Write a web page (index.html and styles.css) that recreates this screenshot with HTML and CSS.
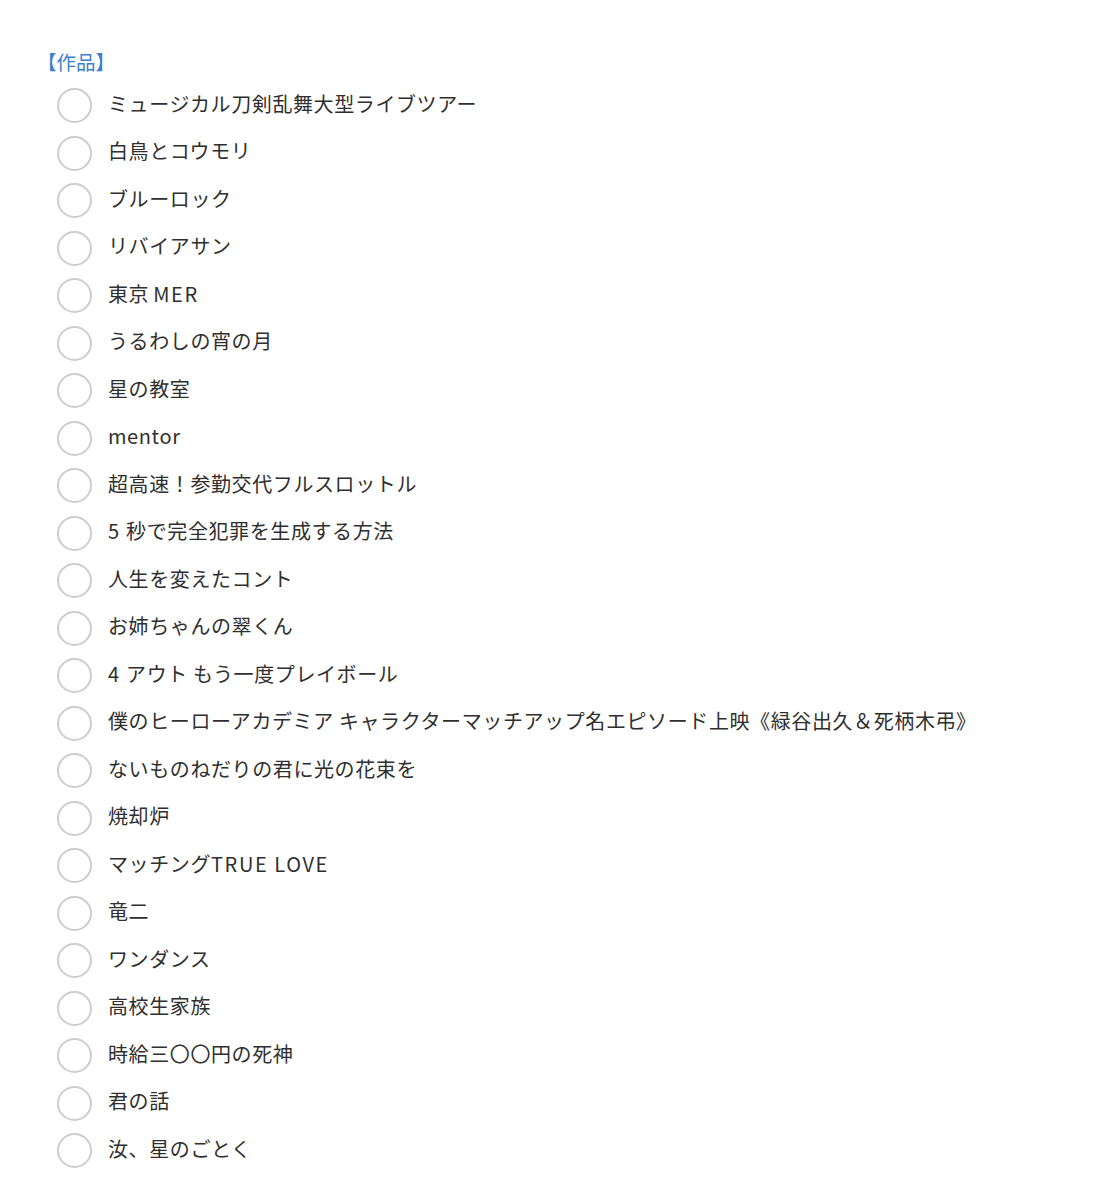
FILE: index.html
```html
<!DOCTYPE html>
<html lang="ja">
<head>
    <meta charset="UTF-8">
    <title>作品</title>
    <link rel="stylesheet" href="styles.css">
</head>
<body>
    <div class="container">
        <div class="heading">【作品】</div>

        <!-- 作品一覧 -->
        <ul class="choices">
            <li><span class="radio"></span><span class="label">ミュージカル刀剣乱舞大型ライブツアー</span></li>
            <li><span class="radio"></span><span class="label">白鳥とコウモリ</span></li>
            <li><span class="radio"></span><span class="label">ブルーロック</span></li>
            <li><span class="radio"></span><span class="label">リバイアサン</span></li>
            <li><span class="radio"></span><span class="label">東京<span class="latin gap">MER</span></span></li>
            <li><span class="radio"></span><span class="label">うるわしの宵の月</span></li>
            <li><span class="radio"></span><span class="label">星の教室</span></li>
            <li><span class="radio"></span><span class="label">mentor</span></li>
            <li><span class="radio"></span><span class="label">超高速！参勤交代フルスロットル</span></li>
            <li><span class="radio"></span><span class="label"><span class="digit">5</span>秒で完全犯罪を生成する方法</span></li>
            <li><span class="radio"></span><span class="label">人生を変えたコント</span></li>
            <li><span class="radio"></span><span class="label">お姉ちゃんの翠くん</span></li>
            <li><span class="radio"></span><span class="label"><span class="digit">4</span>アウト もう一度プレイボール</span></li>
            <li><span class="radio"></span><span class="label">僕のヒーローアカデミア キャラクターマッチアップ名エピソード上映《緑谷出久＆死柄木弔》</span></li>
            <li><span class="radio"></span><span class="label">ないものねだりの君に光の花束を</span></li>
            <li><span class="radio"></span><span class="label">焼却炉</span></li>
            <li><span class="radio"></span><span class="label">マッチング<span class="latin">TRUE LOVE</span></span></li>
            <li><span class="radio"></span><span class="label">竜二</span></li>
            <li><span class="radio"></span><span class="label">ワンダンス</span></li>
            <li><span class="radio"></span><span class="label">高校生家族</span></li>
            <li><span class="radio"></span><span class="label">時給三〇〇円の死神</span></li>
            <li><span class="radio"></span><span class="label">君の話</span></li>
            <li><span class="radio"></span><span class="label">汝、星のごとく</span></li>
        </ul>
    </div>
</body>
</html>
```

FILE: styles.css
```css
body {
    font-family: "Noto Sans CJK JP", "Noto Sans", sans-serif;
    background-color: #ffffff;
    color: #333;
    margin: 0;
    padding: 0;
}
.container {
    padding: 47px 40px 0 40px;
}
.heading {
    font-size: 19.5px;
    line-height: 30px;
    color: #3a80d2;
    margin: 0 0 3px -3px;
}
.choices {
    list-style: none;
    margin: 0;
    padding: 0 0 0 17px;
}
.choices li {
    display: flex;
    align-items: center;
    height: 47.5px;
}
.radio {
    flex: none;
    width: 31px;
    height: 31px;
    border: 2.5px solid #cdcdcd;
    border-radius: 50%;
    margin-right: 16px;
    margin-top: 4px;
}
.label {
    font-size: 20px;
    letter-spacing: 0.6px;
    line-height: 28px;
    color: #2f2f2f;
    white-space: nowrap;
}
.latin {
    letter-spacing: 1.6px;
}
.gap {
    margin-left: 4px;
}
.digit {
    letter-spacing: 7px;
}
```
